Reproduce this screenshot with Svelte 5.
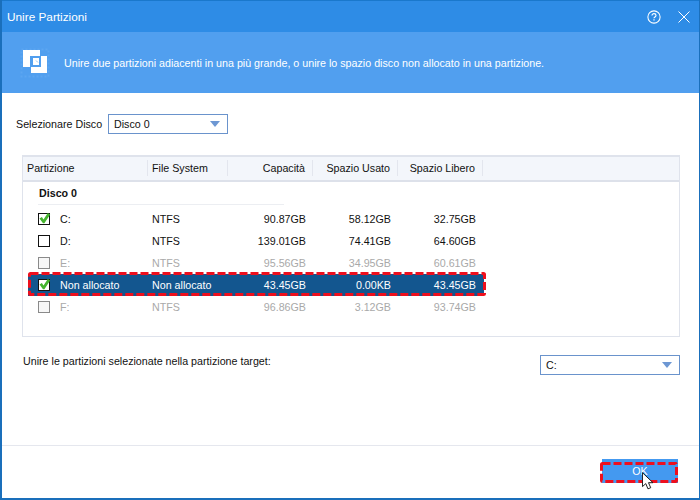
<script>
  const columns = [
    { label: 'Partizione', cls: 'c1' },
    { label: 'File System', cls: 'c2' },
    { label: 'Capacità', cls: 'c3' },
    { label: 'Spazio Usato', cls: 'c4' },
    { label: 'Spazio Libero', cls: 'c5' }
  ];
  const rows = [
    { name: 'C:', fs: 'NTFS', cap: '90.87GB', used: '58.12GB', free: '32.75GB', checked: true },
    { name: 'D:', fs: 'NTFS', cap: '139.01GB', used: '74.41GB', free: '64.60GB' },
    { name: 'E:', fs: 'NTFS', cap: '95.56GB', used: '34.95GB', free: '60.61GB', disabled: true },
    { name: 'Non allocato', fs: 'Non allocato', cap: '43.45GB', used: '0.00KB', free: '43.45GB', checked: true, selected: true },
    { name: 'F:', fs: 'NTFS', cap: '96.86GB', used: '3.12GB', free: '93.74GB', disabled: true }
  ];
</script>

<div class="window">
  <header class="title">
    <span class="title-text">Unire Partizioni</span>
    <svg class="help" width="14" height="14" viewBox="0 0 16 16" fill="none" stroke="#fff">
      <circle cx="8" cy="8" r="7" stroke-width="1.2" />
      <path d="M5.7 6.3c0-1.4 1.1-2.1 2.3-2.1s2.3.7 2.3 2c0 1.8-2.3 1.7-2.3 3.3" stroke-width="1.3" />
      <path d="M8 10.5v1.500" stroke-width="1.4" />
    </svg>
    <svg class="close" width="12" height="12" viewBox="0 0 12 12" stroke="#fff" stroke-width="1">
      <path d="M.5.5l11 11M11.5.5l-11 11" />
    </svg>
  </header>

  <div class="banner">
    <svg class="merge" width="32" height="32" viewBox="0 0 32 32">
      <rect x="2.5" y="2.5" width="27" height="27" fill="none" stroke="#5ca6f1" stroke-width="2" stroke-dasharray="2 2" />
      <path fill="#fff" d="M4 3h17v6H11v11H4z" />
      <path fill="#fff" d="M28 9v17H12v-6h10V9z" />
      <path fill="#fff" d="M14 11h6v7h-6z" />
      <path fill="none" stroke="#8fc3f6" d="M17 13.5l2 2" />
    </svg>
    <span>Unire due partizioni adiacenti in una più grande, o unire lo spazio disco non allocato in una partizione.</span>
  </div>

  <main class="body">
    <div class="disk-row">
      <span class="disk-label">Selezionare Disco</span>
      <div class="select disk-select">
        <span>Disco 0</span>
        <i class="arrow"></i>
      </div>
    </div>

    <section class="table">
      <div class="thead">
        {#each columns as c}
          <div class="th {c.cls}">{c.label}</div>
        {/each}
      </div>
      <div class="group">Disco 0</div>
      <div class="tbody">
        {#each rows as r}
          <div class="row" class:disabled={r.disabled} class:selected={r.selected}>
            <div class="cell c1">
              <span class="check">
                {#if r.checked}
                  <svg width="13" height="13" viewBox="0 0 13 13">
                    <path d="M1.5 6.5l2.4-1.5 1.600 2.400L9.800 1l2.400 1.400-5.800 8.800H5z" fill="#45b52e" />
                  </svg>
                {/if}
              </span>
              <span class="name">{r.name}</span>
            </div>
            <div class="cell c2">{r.fs}</div>
            <div class="cell c3 num">{r.cap}</div>
            <div class="cell c4 num">{r.used}</div>
            <div class="cell c5 num">{r.free}</div>
          </div>
        {/each}
      </div>
      <svg class="mark mark-row" width="458" height="24" viewBox="0 0 458 24">
        <rect x="1.5" y="1.5" width="455" height="21" rx="1" />
      </svg>
    </section>

    <div class="target-row">
      <span>Unire le partizioni selezionate nella partizione target:</span>
      <div class="select target-select">
        <span>C:</span>
        <i class="arrow"></i>
      </div>
    </div>
  </main>

  <footer class="footer">
    <button class="ok">OK
      <svg class="mark mark-ok" width="78" height="21" viewBox="0 0 78 21">
        <rect x="1.5" y="1.5" width="75" height="18" rx="1" />
      </svg>
      <svg class="cursor" width="13" height="19" viewBox="0 0 14 20">
        <path d="M.5.5v15l3.6-3.2 2.3 5.6 3-1.2-2.4-5.4h4.8z" fill="#fff" stroke="#111" stroke-width="1" />
      </svg>
    </button>
  </footer>
</div>

<style>
  :global(body) { margin: 0; }
  .window {
    width: 700px; height: 500px; box-sizing: border-box;
    display: flex; flex-direction: column;
    background: #fff;
    border-left: 2px solid #1a6fbb; border-right: 1px solid #1a6fbb; border-bottom: 2px solid #1a6fbb;
    font-family: "Liberation Sans", sans-serif; font-size: 10.7px; color: #111;
  }
  .title {
    height: 32px; flex: none; display: flex; align-items: center;
    background: #2e8ce6; color: #fff; font-size: 11.8px; padding: 0 9px 0 5px;
    border-top: 1px solid #1a78cc; box-sizing: border-box;
  }
  .title-text { flex: 1; }
  .close { margin-left: 17px; }
  .banner {
    height: 61px; flex: none; display: flex; align-items: center; gap: 13px;
    background: #519fef; color: #fff; padding: 0 0 0 17px; box-sizing: border-box;
  }
  .merge { flex: none; }
  .body { flex: 1; display: flex; flex-direction: column; padding: 21px 19px 0 20px; min-height: 0; }
  .disk-row { display: flex; align-items: center; margin-left: -6px; gap: 10px; }
  .disk-label { width: 82px; flex: none; white-space: nowrap; }
  .select {
    box-sizing: border-box; height: 20px; display: flex; align-items: center; justify-content: space-between;
    border: 1px solid #6a93cc; padding: 0 7px 0 5px;
  }
  .disk-select { width: 120px; }
  .target-select { width: 140px; }
  .arrow { width: 0; height: 0; border-left: 5.5px solid transparent; border-right: 5.5px solid transparent; border-top: 6px solid #6d97d3; }
  .table {
    position: relative; margin-top: 21px; height: 182px; box-sizing: border-box;
    border: 1px solid #dfe3ec; border-top-width: 2px;
  }
  .thead { height: 20px; padding-top: 3px; display: flex; background: #f3f6fb; border-bottom: 2px solid #dde1ea; box-sizing: content-box; align-items: flex-start; }
  .th { box-sizing: border-box; height: 16px; line-height: 16px; border-right: 1px solid #e3e6ee; white-space: nowrap; }
  .th.c1 { width: 125px; padding-left: 4px; }
  .th.c2 { padding-left: 4px; }
  .c1 { width: 120px; flex: none; box-sizing: border-box; }
  .c2 { width: 80px; flex: none; padding-left: 4px; box-sizing: border-box; }
  .c3, .c4, .c5 { width: 85px; flex: none; text-align: right; padding-right: 7px; box-sizing: border-box; }
  .group { margin: 0 0 0 15px; width: 245px; height: 22px; line-height: 22px; font-weight: bold; border-bottom: 1px solid #eceef2; padding-left: 1px; box-sizing: content-box; }
  .tbody { padding-top: 3px; }
  .row { height: 22px; display: flex; align-items: center; width: 456px; margin-left: 5px; }
  .cell.c1 { display: flex; align-items: center; padding-left: 10px; }
  .check { width: 10px; height: 10px; border: 1px solid #111; position: relative; display: block; flex: none; background: #fff; }
  .check svg { position: absolute; left: -1px; top: -2px; }
  .name { margin-left: 10px; white-space: nowrap; }
  .disabled { color: #a9a9a9; }
  .disabled .check { border-color: #8a8a8a; background: #f7f7f7; }
  .selected { background: #13568f; color: #fff; }
  .mark { position: absolute; pointer-events: none; fill: none; stroke: #ee0f1d; stroke-width: 3; stroke-dasharray: 8 3; }
  .mark-row { left: 5px; top: 115px; }
  .target-row { margin-top: 18px; display: flex; justify-content: space-between; align-items: flex-start; margin-left: 1px; }
  .footer { height: 53px; flex: none; margin-top: auto; border-top: 1px solid #e5e7ee; display: flex; justify-content: flex-end; padding: 13px 21px 0 0; box-sizing: border-box; }
  .ok { position: relative; width: 76px; height: 24px; border: 0; padding: 0; background: #4499f0; color: #fff; font: inherit; }
  .mark-ok { left: -2px; top: 3px; }
  .cursor { position: absolute; left: 40px; top: 13px; }
</style>
